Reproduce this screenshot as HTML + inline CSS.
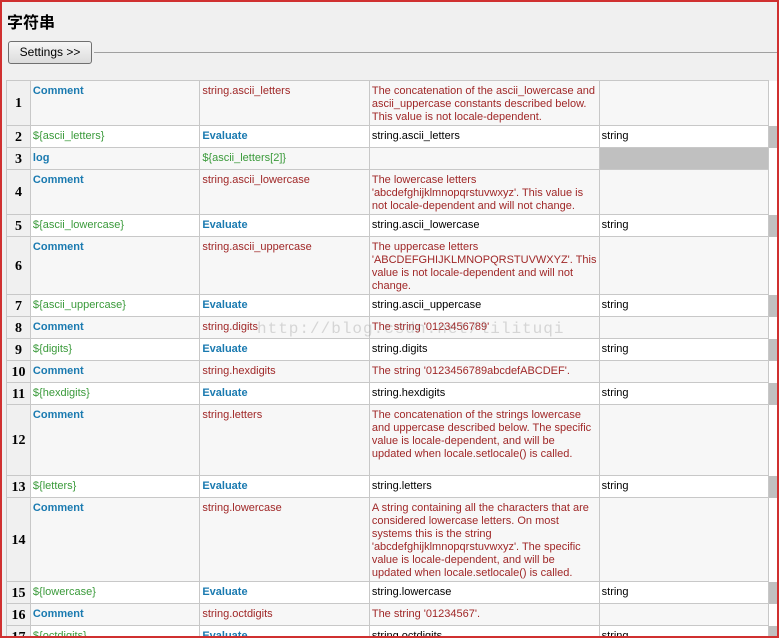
<!DOCTYPE html>
<html><head><meta charset="utf-8"><style>
body{margin:0;width:779px;height:638px;overflow:hidden;background:#f0f0f0;font-family:"Liberation Sans",Tahoma,sans-serif;}
.frame{position:absolute;left:0;top:0;width:775px;height:634px;border:2px solid #d03030;background:#f0f0f0;overflow:hidden}
.title{position:absolute;left:5px;top:7px;font:bold 16px "Noto Sans CJK SC",sans-serif;color:#000}
.btn{position:absolute;left:6px;top:39px;width:82px;height:21px;border:1px solid #707070;border-radius:3px;background:linear-gradient(#f6f6f6,#dcdcdc);font-size:12px;line-height:21px;text-align:center;color:#000}
.line{position:absolute;left:92px;top:50px;right:0;border-top:1px solid #a0a0a0}
table{position:absolute;left:4px;top:78px;border-collapse:collapse;table-layout:fixed;font-size:11px}
td{border:1px solid #c8c8c8;vertical-align:top;padding:4px 2px 0 2px;line-height:13px;overflow:hidden;white-space:nowrap}
td.n{background:#f0f0f0;font:bold 14px "Liberation Serif",serif;text-align:center;vertical-align:middle;padding:2px 0 0 0;color:#000}
tr.c td{background:#f7f7f7}
tr.e td{background:#fff}
tr td.n{background:#f0f0f0}
td.w{white-space:normal}
td.s{background:#fff!important;border:none;border-left:1px solid #c8c8c8}
tr.e td.s{background:#c0c0c0!important}
.k{color:#1a7ab0;font-weight:bold}
.g{color:#3a9a3a}
.r{color:#a02828}
.b{color:#000}
.gr{background:#c0c0c0!important}
.wm{position:absolute;left:255px;top:318px;font:16px "Liberation Mono",monospace;color:rgba(150,150,150,.35);letter-spacing:1px}
</style></head><body><div class="frame">
<div class="title">字符串</div>
<div class="btn">Settings &gt;&gt;</div>
<div class="line"></div>
<table>
<colgroup><col style="width:24px"><col style="width:170px"><col style="width:170px"><col style="width:230px"><col style="width:170px"><col style="width:9px"></colgroup>
<tr class="c" style="height:45px"><td class="n">1</td><td class="k">Comment</td><td class="r">string.ascii_letters</td><td class="r w">The concatenation of the ascii_lowercase and ascii_uppercase constants described below. This value is not locale-dependent.</td><td></td><td class="s"></td></tr>
<tr class="e" style="height:22px"><td class="n">2</td><td class="g">${ascii_letters}</td><td class="k">Evaluate</td><td class="b">string.ascii_letters</td><td class="b">string</td><td class="s"></td></tr>
<tr class="c" style="height:22px"><td class="n">3</td><td class="k">log</td><td class="g">${ascii_letters[2]}</td><td></td><td class="gr"></td><td class="s gr"></td></tr>
<tr class="c" style="height:45px"><td class="n">4</td><td class="k">Comment</td><td class="r">string.ascii_lowercase</td><td class="r w">The lowercase letters 'abcdefghijklmnopqrstuvwxyz'. This value is not locale-dependent and will not change.</td><td></td><td class="s"></td></tr>
<tr class="e" style="height:22px"><td class="n">5</td><td class="g">${ascii_lowercase}</td><td class="k">Evaluate</td><td class="b">string.ascii_lowercase</td><td class="b">string</td><td class="s"></td></tr>
<tr class="c" style="height:58px"><td class="n">6</td><td class="k">Comment</td><td class="r">string.ascii_uppercase</td><td class="r w">The uppercase letters 'ABCDEFGHIJKLMNOPQRSTUVWXYZ'. This value is not locale-dependent and will not change.</td><td></td><td class="s"></td></tr>
<tr class="e" style="height:22px"><td class="n">7</td><td class="g">${ascii_uppercase}</td><td class="k">Evaluate</td><td class="b">string.ascii_uppercase</td><td class="b">string</td><td class="s"></td></tr>
<tr class="c" style="height:22px"><td class="n">8</td><td class="k">Comment</td><td class="r">string.digits</td><td class="r">The string '0123456789'</td><td></td><td class="s"></td></tr>
<tr class="e" style="height:22px"><td class="n">9</td><td class="g">${digits}</td><td class="k">Evaluate</td><td class="b">string.digits</td><td class="b">string</td><td class="s"></td></tr>
<tr class="c" style="height:22px"><td class="n">10</td><td class="k">Comment</td><td class="r">string.hexdigits</td><td class="r">The string '0123456789abcdefABCDEF'.</td><td></td><td class="s"></td></tr>
<tr class="e" style="height:22px"><td class="n">11</td><td class="g">${hexdigits}</td><td class="k">Evaluate</td><td class="b">string.hexdigits</td><td class="b">string</td><td class="s"></td></tr>
<tr class="c" style="height:71px"><td class="n">12</td><td class="k">Comment</td><td class="r">string.letters</td><td class="r w">The concatenation of the strings lowercase and uppercase described below. The specific value is locale-dependent, and will be updated when locale.setlocale() is called.</td><td></td><td class="s"></td></tr>
<tr class="e" style="height:22px"><td class="n">13</td><td class="g">${letters}</td><td class="k">Evaluate</td><td class="b">string.letters</td><td class="b">string</td><td class="s"></td></tr>
<tr class="c" style="height:84px"><td class="n">14</td><td class="k">Comment</td><td class="r">string.lowercase</td><td class="r w">A string containing all the characters that are considered lowercase letters. On most systems this is the string 'abcdefghijklmnopqrstuvwxyz'. The specific value is locale-dependent, and will be updated when locale.setlocale() is called.</td><td></td><td class="s"></td></tr>
<tr class="e" style="height:22px"><td class="n">15</td><td class="g">${lowercase}</td><td class="k">Evaluate</td><td class="b">string.lowercase</td><td class="b">string</td><td class="s"></td></tr>
<tr class="c" style="height:22px"><td class="n">16</td><td class="k">Comment</td><td class="r">string.octdigits</td><td class="r">The string '01234567'.</td><td></td><td class="s"></td></tr>
<tr class="e" style="height:22px"><td class="n">17</td><td class="g">${octdigits}</td><td class="k">Evaluate</td><td class="b">string.octdigits</td><td class="b">string</td><td class="s"></td></tr>
</table>
<div class="wm">http://blog.csdn.net/lilituqi</div>
</div></body></html>
